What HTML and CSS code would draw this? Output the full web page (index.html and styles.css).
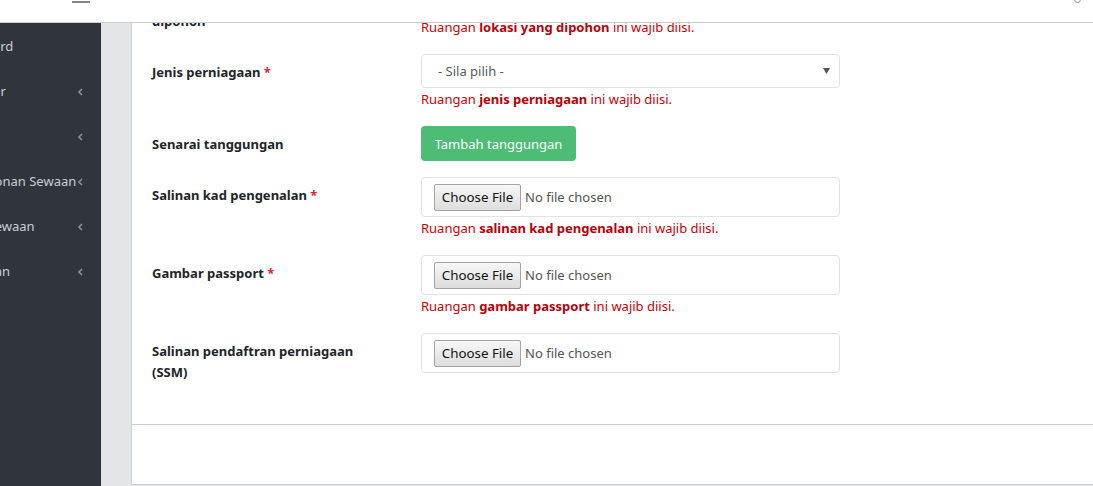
FILE: index.html
```html
<!DOCTYPE html>
<html lang="ms">
<head>
<meta charset="utf-8">
<title>Permohonan Sewaan</title>
<link rel="stylesheet" href="styles.css">
</head>
<body>
<header class="navbar">
  <span class="burger"></span>
  <span class="user-dot"></span>
</header>
<div class="layout">
  <aside class="sidebar">
    <ul class="menu">
      <li><span class="label">Dashboard</span></li>
      <li><span class="label">Pentadbir</span><svg class="chev" width="5" height="8" viewBox="0 0 5 8"><path d="M4 1L1 4l3 3" fill="none" stroke="currentColor" stroke-width="1.6"/></svg></li>
      <li><span class="label">Aset</span><svg class="chev" width="5" height="8" viewBox="0 0 5 8"><path d="M4 1L1 4l3 3" fill="none" stroke="currentColor" stroke-width="1.6"/></svg></li>
      <li><span class="label">Permohonan Sewaan</span><svg class="chev" width="5" height="8" viewBox="0 0 5 8"><path d="M4 1L1 4l3 3" fill="none" stroke="currentColor" stroke-width="1.6"/></svg></li>
      <li><span class="label">Rekod Sewaan</span><svg class="chev" width="5" height="8" viewBox="0 0 5 8"><path d="M4 1L1 4l3 3" fill="none" stroke="currentColor" stroke-width="1.6"/></svg></li>
      <li><span class="label">Kewangan</span><svg class="chev" width="5" height="8" viewBox="0 0 5 8"><path d="M4 1L1 4l3 3" fill="none" stroke="currentColor" stroke-width="1.6"/></svg></li>
    </ul>
  </aside>
  <main class="content">
    <section class="card">
      <div class="card-body">
        <div class="form-row">
          <div class="form-label">Lokasi premis perniagaan yang dipohon <span class="req">*</span></div>
          <div class="form-control-col">
            <div class="select"><span>- Sila pilih -</span></div>
            <div class="error">Ruangan <b>lokasi yang dipohon</b> ini wajib diisi.</div>
          </div>
        </div>
        <div class="form-row">
          <div class="form-label">Jenis perniagaan <span class="req">*</span></div>
          <div class="form-control-col">
            <div class="select"><span>- Sila pilih -</span><svg width="7" height="6" viewBox="0 0 7 6"><path d="M0 0h7L3.5 6z" fill="#555"/></svg></div>
            <div class="error">Ruangan <b>jenis perniagaan</b> ini wajib diisi.</div>
          </div>
        </div>
        <div class="form-row">
          <div class="form-label">Senarai tanggungan</div>
          <div class="form-control-col">
            <button class="btn-green" type="button">Tambah tanggungan</button>
          </div>
        </div>
        <div class="form-row">
          <div class="form-label">Salinan kad pengenalan <span class="req">*</span></div>
          <div class="form-control-col">
            <div class="file"><span class="file-btn">Choose File</span><span class="file-name">No file chosen</span></div>
            <div class="error">Ruangan <b>salinan kad pengenalan</b> ini wajib diisi.</div>
          </div>
        </div>
        <div class="form-row">
          <div class="form-label">Gambar passport <span class="req">*</span></div>
          <div class="form-control-col">
            <div class="file"><span class="file-btn">Choose File</span><span class="file-name">No file chosen</span></div>
            <div class="error">Ruangan <b>gambar passport</b> ini wajib diisi.</div>
          </div>
        </div>
        <div class="form-row last">
          <div class="form-label">Salinan pendaftran perniagaan (SSM)</div>
          <div class="form-control-col">
            <div class="file"><span class="file-btn">Choose File</span><span class="file-name">No file chosen</span></div>
          </div>
        </div>
      </div>
      <div class="card-footer"></div>
    </section>
  </main>
</div>
</body>
</html>
```

FILE: styles.css
```css
* { box-sizing: border-box; }
html, body { margin: 0; height: 100%; overflow: hidden; }
body {
  font-family: "Noto Sans", "Open Sans", sans-serif;
  font-size: 13px;
  color: #212529;
  background: #e4e5e7;
}

.navbar {
  height: 23px;
  background: #fff;
  border-bottom: 1px solid #c9cdd2;
  display: flex;
  align-items: flex-start;
}
.burger {
  width: 18px;
  height: 2px;
  background: #7f8792;
  margin: 1px 0 0 72px;
}
.user-dot {
  margin: -4px 12px 0 auto;
  width: 7px;
  height: 7px;
  border-radius: 50%;
  border: 1px solid #9a8fb0;
}

.layout { display: flex; height: 463px; }

.sidebar {
  width: 101px;
  flex: none;
  background: #30343b;
  overflow: hidden;
}
.menu {
  list-style: none;
  margin: 0 0 0 -54px;
  padding: 1px 0 0;
  width: 155px;
}
.menu li {
  display: flex;
  align-items: center;
  height: 45px;
  padding-right: 18px;
  color: #c9ced6;
  white-space: nowrap;
  line-height: 21px;
}
.menu .chev { margin-left: auto; color: #8a9098; flex: none; }

.content {
  flex: 1;
  overflow: hidden;
  padding-left: 30px;
}
.card {
  background: #fff;
  border: 1px solid #cbced2;
  margin: -62px -10px 0 0;
}
.card-body { padding: 20px 20px 25px 20px; }
.card-footer { height: 60px; border-top: 1px solid #cbced2; }

.form-row {
  display: grid;
  grid-template-columns: 269px 419px;
  margin-bottom: 16px;
}
.form-label {
  padding: 8px 30px 0 0;
  line-height: 21px;
  font-weight: 700;
  color: #212529;
}
.req { color: #e0243c; }
.form-control-col { display: flex; flex-direction: column; align-items: flex-start; }

.select {
  width: 100%;
  height: 34px;
  border: 1px solid #dfe2e6;
  border-radius: 4px;
  display: flex;
  align-items: center;
  justify-content: space-between;
  padding: 0 9px 0 16px;
  color: #555b62;
}
.error {
  margin-top: 1px;
  line-height: 21px;
  color: #c8000a;
}
.error b { color: #b5000a; }

.btn-green {
  height: 35px;
  width: 155px;
  padding: 0;
  background: #4dbc74;
  color: #fff;
  border: none;
  border-radius: 4px;
  font: inherit;
}

.file {
  width: 100%;
  height: 40px;
  border: 1px solid #e0e3e6;
  border-radius: 4px;
  display: flex;
  align-items: center;
  padding-left: 12px;
  gap: 4px;
}
.file-btn {
  height: 27px;
  width: 87px;
  border: 1px solid #a3a3a3;
  border-radius: 2px;
  background: linear-gradient(#f7f7f7, #dddddd);
  font-size: 13.33px;
  display: flex;
  align-items: center;
  justify-content: center;
  color: #111;
}
.file-name { color: #555; }
```
